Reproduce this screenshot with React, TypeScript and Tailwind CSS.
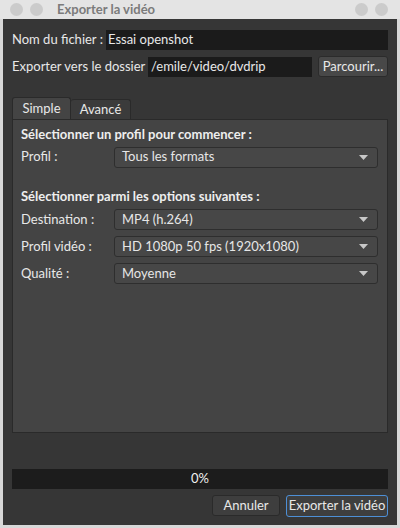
import React from "react";

function Combo({ value }: { value: string }) {
  return (
    <div className="flex-1 h-[21px] flex items-center justify-between pl-[7px] pr-[9px] bg-[#474747] border border-[#2e2e2e] rounded-[3px] text-[#e6e6e6]">
      <span>{value}</span>
      <svg width="9" height="5" viewBox="0 0 9 5">
        <path d="M0 0 L9 0 L4.5 5 Z" fill="#c8c8c8" />
      </svg>
    </div>
  );
}

function Row({ label, value }: { label: string; value: string }) {
  return (
    <div className="flex items-center">
      <div className="w-[93px] shrink-0">{label}</div>
      <Combo value={value} />
    </div>
  );
}

export default function App() {
  return (
    <div
      className="w-[400px] h-[528px] flex flex-col bg-[#d8d8d8] text-[13px] text-[#e8e8e8]"
      style={{ fontFamily: "Lato, 'Noto Sans', sans-serif" }}
    >
      {/* barre de titre */}
      <div className="h-[19px] shrink-0 flex items-center bg-[#e4e4e4] px-[10px]">
        <div className="flex gap-[7px]">
          <div className="w-[13px] h-[13px] rounded-full bg-[#cbcbcb]" />
          <div className="w-[13px] h-[13px] rounded-full bg-[#cbcbcb]" />
        </div>
        <div className="ml-[14px] font-bold text-[13px] text-[#7b7b7b]">Exporter la vidéo</div>
        <div className="ml-auto flex gap-[7px] mr-[2px]">
          <div className="w-[13px] h-[13px] rounded-full bg-[#cbcbcb]" />
          <div className="w-[13px] h-[13px] rounded-full bg-[#cbcbcb]" />
        </div>
      </div>

      {/* contenu */}
      <div className="flex-1 mx-[3px] mb-[3px] bg-[#363636] flex flex-col pl-[9px] pr-[9px] pt-[11px] pb-[8px]">
        <div className="flex items-center h-[20px]">
          <div className="w-[94px] shrink-0">Nom du fichier :</div>
          <div className="flex-1 h-[20px] bg-[#1b1b1b] flex items-center pl-[2px]">Essai openshot</div>
        </div>

        <div className="flex items-center h-[21px] mt-[6px]">
          <div className="w-[136px] shrink-0">Exporter vers le dossier</div>
          <div className="w-[164px] h-[20px] bg-[#1b1b1b] flex items-center pl-[3px]">/emile/video/dvdrip</div>
          <div className="ml-auto w-[70px] h-[21px] bg-[#484848] border border-[#2b2b2b] rounded-[3px] flex items-center justify-center">
            Parcourir...
          </div>
        </div>

        {/* onglets */}
        <div className="flex items-end mt-[20px] h-[22px]">
          <div className="h-[22px] w-[59px] flex items-center justify-center bg-[#444444] border border-[#2a2a2a] border-b-0 rounded-t-[3px]">
            Simple
          </div>
          <div className="h-[20px] w-[60px] flex items-center justify-center bg-[#3b3b3b] border border-[#2a2a2a] border-b-0 border-l-0 rounded-t-[3px]">
            Avancé
          </div>
        </div>
        <div className="h-[314px] bg-[#444444] border border-[#2a2a2a] pl-[8px] pr-[9px] pt-[5px] flex flex-col">
          <div className="font-bold text-[#eeeeee]">Sélectionner un profil pour commencer :</div>
          <div className="mt-[2px]">
            <Row label="Profil :" value="Tous les formats" />
          </div>
          <div className="font-bold text-[#eeeeee] mt-[19px]">Sélectionner parmi les options suivantes :</div>
          <div className="mt-[3px] flex flex-col gap-[6px]">
            <Row label="Destination :" value="MP4 (h.264)" />
            <Row label="Profil vidéo :" value="HD 1080p 50 fps (1920x1080)" />
            <Row label="Qualité :" value="Moyenne" />
          </div>
        </div>

        {/* progression */}
        <div className="mt-[36px] h-[20px] bg-[#1c1c1c] flex items-center justify-center text-[#f0f0f0]">0%</div>

        <div className="mt-[6px] flex justify-end gap-[6px]">
          <div className="w-[68px] h-[21px] bg-[#3e3e3e] border border-[#2a2a2a] rounded-[3px] flex items-center justify-center">
            Annuler
          </div>
          <div className="w-[102px] h-[22px] bg-[#3e3e3e] border border-[#4d8fd6] rounded-[3px] flex items-center justify-center">
            Exporter la vidéo
          </div>
        </div>
      </div>
    </div>
  );
}
